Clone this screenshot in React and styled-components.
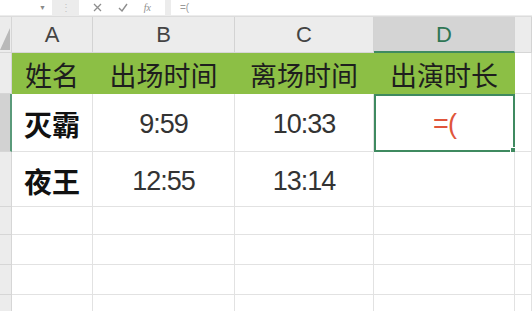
import React from "react";
import styled, { createGlobalStyle, css } from "styled-components";

const Global = createGlobalStyle`
  html, body { margin: 0; padding: 0; background: #fff; }
  body { font-family: "Liberation Sans", "Noto Sans CJK SC", sans-serif; overflow: hidden; }
  #root { width: 532px; height: 311px; overflow: hidden; }
`;

const Bar = styled.div`
  display: flex;
  align-items: stretch;
  height: 17px;
  box-sizing: border-box;
  background: #ececec;
  border-bottom: 1px solid #dcdcdc;
  padding-bottom: 1px;
`;

const NameBox = styled.div`
  width: 52px;
  background: #fff;
  display: flex;
  justify-content: flex-end;
  align-items: center;
  padding-right: 6px;
  box-sizing: border-box;
  color: #8a8a8a;
  font-size: 7px;
`;

const Grip = styled.div`
  width: 27px;
  display: flex;
  justify-content: center;
  align-items: center;
  color: #c4c4c4;
  font-size: 10px;
  letter-spacing: -1px;
`;

const FxBox = styled.div`
  width: 86px;
  background: #fff;
  display: flex;
  align-items: center;
  justify-content: space-around;
  padding: 0 6px;
  box-sizing: border-box;
  color: #8e8e8e;
`;

const FormulaInput = styled.div`
  flex: 1;
  margin-left: 6px;
  background: #fff;
  display: flex;
  align-items: center;
  padding-left: 9px;
  font-size: 10px;
  color: #9a9a9a;
`;

const Sheet = styled.div`
  display: grid;
  grid-template-columns: 12px 81px 142px 139px 141px 1fr;
  grid-template-rows: 36px 41px 58px 55px 28px 30px 30px 30px;
`;

const Corner = styled.div`
  background: #ececec;
  border-right: 1px solid #d6d6d6;
  border-bottom: 1px solid #d6d6d6;
  box-sizing: border-box;
  position: relative;
  overflow: hidden;
  &::after {
    content: "";
    position: absolute;
    right: 1px;
    bottom: 2px;
    border-style: solid;
    border-width: 0 0 22px 10px;
    border-color: transparent transparent #b9b9b9 transparent;
  }
`;

const ColHeader = styled.div`
  background: ${(p) => (p.$active ? "#d4d4d4" : "#ececec")};
  border-right: 1px solid #d3d3d3;
  border-bottom: ${(p) => (p.$active ? "2px solid #3f8a60" : "1px solid #d6d6d6")};
  box-sizing: border-box;
  display: flex;
  align-items: center;
  justify-content: center;
  font-family: "Liberation Sans", sans-serif;
  font-size: 22px;
  color: ${(p) => (p.$active ? "#2f7654" : "#444")};
  padding-top: 1px;
`;

const RowHeader = styled.div`
  background: ${(p) => (p.$active ? "#d2d2d2" : "#ececec")};
  border-right: ${(p) => (p.$active ? "2px solid #5a9a7a" : "1px solid #d6d6d6")};
  border-bottom: 1px solid #d6d6d6;
  box-sizing: border-box;
`;

const Cell = styled.div`
  box-sizing: border-box;
  border-right: 1px solid #e2e2e2;
  border-bottom: 1px solid #e2e2e2;
  display: flex;
  align-items: center;
  justify-content: center;
  position: relative;
  background: #fff;
  ${(p) =>
    p.$kind === "head" &&
    css`
      background: #8cbf45;
      border-right-color: #8cbf45;
      border-bottom-color: #8cbf45;
      font-family: "Noto Sans CJK SC", sans-serif;
      font-size: 27px;
      color: #1e1e1e;
      padding-top: 2px;
    `}
  ${(p) =>
    p.$kind === "name" &&
    css`
      font-family: "Noto Sans CJK SC", sans-serif;
      font-weight: 700;
      font-size: 28px;
      color: #111;
      padding-top: 3px;
    `}
  ${(p) =>
    p.$kind === "time" &&
    css`
      font-family: "Liberation Sans", sans-serif;
      font-size: 27px;
      letter-spacing: -1px;
      color: #333;
      padding-top: 4px;
    `}
  ${(p) =>
    p.$selected &&
    css`
      border: 2px solid #3f8a60;
      color: #e0553b;
      font-family: "Liberation Sans", sans-serif;
      font-size: 27px;
      padding-top: 3px;
    `}
`;

const FillHandle = styled.span`
  position: absolute;
  right: -3px;
  bottom: -3px;
  width: 4px;
  height: 4px;
  background: #3f8a60;
  border: 1px solid #fff;
`;

function XIcon() {
  return (
    <svg width="9" height="9" viewBox="0 0 9 9">
      <path d="M1 1 L8 8 M8 1 L1 8" stroke="#8e8e8e" strokeWidth="1.3" fill="none" />
    </svg>
  );
}
function CheckIcon() {
  return (
    <svg width="10" height="9" viewBox="0 0 10 9">
      <path d="M1 5 L4 8 L9 1" stroke="#8e8e8e" strokeWidth="1.4" fill="none" />
    </svg>
  );
}
const Fx = styled.span`
  font-family: "Liberation Serif", serif;
  font-style: italic;
  font-size: 10px;
  color: #8e8e8e;
`;

const cols = ["A", "B", "C", "D"];
const rows = [
  { kind: "head", cells: ["姓名", "出场时间", "离场时间", "出演时长"] },
  { cells: ["灭霸", "9:59", "10:33", "=("], active: true },
  { cells: ["夜王", "12:55", "13:14", ""] },
  { cells: ["", "", "", ""] },
  { cells: ["", "", "", ""] },
  { cells: ["", "", "", ""] },
  { cells: ["", "", "", ""] },
];

export default function App() {
  return (
    <>
      <Global />
      <Bar>
        <NameBox>▼</NameBox>
        <Grip>⋮</Grip>
        <FxBox>
          <XIcon />
          <CheckIcon />
          <Fx>fx</Fx>
        </FxBox>
        <FormulaInput>=(</FormulaInput>
      </Bar>
      <Sheet>
        <Corner />
        {cols.map((c) => (
          <ColHeader key={c} $active={c === "D"}>
            {c}
          </ColHeader>
        ))}
        <ColHeader />
        {rows.map((r, ri) => (
          <React.Fragment key={ri}>
            <RowHeader $active={r.active} />
            {r.cells.map((t, ci) => {
              const selected = ri === 1 && ci === 3;
              const kind = r.kind === "head" ? "head" : ci === 0 ? "name" : "time";
              return (
                <Cell key={ci} $kind={kind} $selected={selected}>
                  {t}
                  {selected && <FillHandle />}
                </Cell>
              );
            })}
            <Cell />
          </React.Fragment>
        ))}
      </Sheet>
    </>
  );
}
